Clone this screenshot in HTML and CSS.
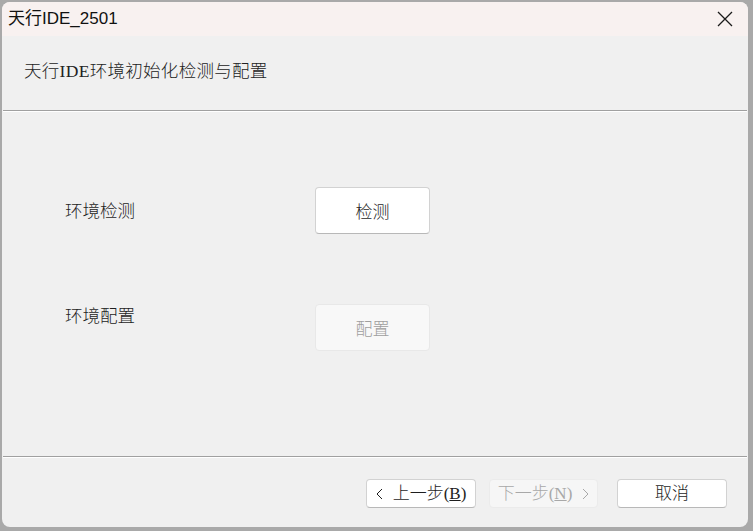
FILE: index.html
```html
<!DOCTYPE html>
<html lang="zh-CN">
<head>
  <meta charset="utf-8">
  <title>天行IDE_2501</title>
  <link rel="stylesheet" href="styles.css">
</head>
<body>
  <div class="window">
    <div class="titlebar">
      <span class="title">天行IDE_2501</span>
      <button type="button" class="close-btn" aria-label="关闭">
        <svg width="16" height="16" viewBox="0 0 16 16">
          <path d="M1 1 L15 15 M15 1 L1 15" stroke="#1a1a1a" stroke-width="1.3" fill="none"/>
        </svg>
      </button>
    </div>

    <div class="header">
      <p class="header-text">天行IDE环境初始化检测与配置</p>
    </div>
    <div class="separator"></div>

    <div class="content">
      <div class="row">
        <span class="row-label">环境检测</span>
        <button type="button" class="action-btn">检测</button>
      </div>
      <div class="row row-top">
        <span class="row-label">环境配置</span>
        <button type="button" class="action-btn" disabled>配置</button>
      </div>
    </div>

    <div class="separator"></div>
    <div class="footer">
      <button type="button" class="nav-btn">
        <svg class="chevron" width="7" height="12" viewBox="0 0 7 12">
          <path d="M6 1 L1 6 L6 11" stroke="currentColor" stroke-width="1" fill="none"/>
        </svg>
        <span class="nav-text">上一步(<u>B</u>)</span>
      </button>
      <button type="button" class="nav-btn" disabled>
        <span class="nav-text">下一步(<u>N</u>)</span>
        <svg class="chevron" width="7" height="12" viewBox="0 0 7 12">
          <path d="M1 1 L6 6 L1 11" stroke="currentColor" stroke-width="1" fill="none"/>
        </svg>
      </button>
      <button type="button" class="nav-btn cancel-btn"><span class="nav-text">取消</span></button>
    </div>
  </div>
</body>
</html>
```

FILE: styles.css
```css
body {
  margin: 0;
  width: 753px;
  height: 531px;
  background-color: #a9a9a9;
  overflow: hidden;
}

.window {
  margin: 2px 0 0 2px;
  width: 746px;
  height: 525px;
  background-color: #f0f0f0;
  border-radius: 8px;
  overflow: hidden;
  display: flex;
  flex-direction: column;
  font-family: "Liberation Serif", "Noto Sans CJK SC", serif;
  color: #1e1e1e;
}

.titlebar {
  height: 34px;
  flex: none;
  display: flex;
  align-items: center;
  justify-content: space-between;
  background-color: #f8f1f0;
  padding: 0 0 0 6px;
}

.title {
  font-family: "Liberation Sans", "Noto Sans CJK SC", sans-serif;
  font-size: 17px;
  color: #111;
  line-height: 1;
  margin-top: -1px;
}

.close-btn {
  width: 46px;
  height: 34px;
  border: none;
  background: transparent;
  padding: 0;
  display: flex;
  align-items: center;
  justify-content: center;
}

.header {
  height: 74px;
  flex: none;
  display: flex;
  align-items: center;
  padding-left: 22px;
}

.header-text {
  margin: -7px 0 0;
  font-size: 17.5px;
  font-weight: 300;
  letter-spacing: 0.3px;
  color: #222;
}

.separator {
  height: 1px;
  flex: none;
  background-color: #a0a0a0;
  border-bottom: 1px solid #ffffff;
  margin: 0 1px;
}

.content {
  flex: 1;
  display: flex;
  flex-direction: column;
  gap: 70px;
  padding: 75px 0 0 63px;
}

.row {
  display: flex;
  align-items: center;
}

.row-top {
  align-items: flex-start;
}

.row-label {
  width: 250px;
  font-size: 17.5px;
  font-weight: 300;
  line-height: 24px;
  color: #1e1e1e;
}

.action-btn {
  width: 115px;
  height: 47px;
  background-color: #ffffff;
  border: 1px solid #d2d2d2;
  border-bottom-color: #b8b8b8;
  border-radius: 4px;
  font-family: "Liberation Serif", "Noto Sans CJK SC", serif;
  font-size: 17px;
  font-weight: 300;
  color: #1e1e1e;
  padding: 0;
}

.action-btn:disabled {
  background-color: #f8f8f8;
  border-color: #e8e8e8;
  color: #9e9e9e;
}

.footer {
  height: 69px;
  flex: none;
  display: flex;
  align-items: flex-start;
  justify-content: flex-end;
  padding: 21px 21px 0 0;
  gap: 13px;
  box-sizing: border-box;
}

.nav-btn {
  width: 110px;
  height: 29px;
  background-color: #ffffff;
  border: 1px solid #d2d2d2;
  border-bottom-color: #b8b8b8;
  border-radius: 4px;
  font-family: "Liberation Serif", "Noto Sans CJK SC", serif;
  font-size: 17px;
  font-weight: 300;
  color: #1e1e1e;
  padding: 0;
  display: flex;
  align-items: center;
  justify-content: center;
  gap: 10px;
  flex: none;
}

.nav-text {
  white-space: nowrap;
  line-height: 1;
}

.nav-btn:disabled {
  width: 109px;
  background-color: #f6f6f6;
  border-color: #ebebeb;
  color: #a8a8a8;
}

.cancel-btn {
  margin-left: 6px;
}

.chevron {
  flex: none;
}
```
